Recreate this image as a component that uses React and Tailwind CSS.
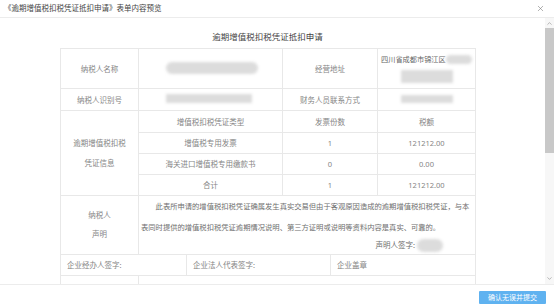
import { X, ChevronUp, ChevronDown } from 'lucide-react'

function Blur({ className }) {
  return <span className={`inline-block bg-[#dcdcdc] blur-[1.5px] ${className}`} />
}

const cell = 'border border-[#e8e8e8] p-0 text-center align-middle'

export default function App() {
  return (
    <div className="flex h-[308px] w-[554px] flex-col overflow-hidden bg-white font-['Noto_Sans','Noto_Sans_CJK_SC',sans-serif] text-[7.5px] text-[#858585]">
      <header className="flex h-[18px] shrink-0 items-center justify-between border-b border-[#ececec] pl-[4px] pr-[9px]">
        <span className="text-[7.5px] leading-none text-[#444]">《逾期增值税扣税凭证抵扣申请》表单内容预览</span>
        <X size={9} strokeWidth={1.5} className="text-[#777]" />
      </header>

      <div className="flex min-h-0 flex-1">
        <main className="min-w-0 flex-1 overflow-hidden">
          <h2 className="mb-[6px] ml-[60px] w-[415px] pt-[14px] text-center text-[8.5px] leading-[10px] text-[#444]">
            逾期增值税扣税凭证抵扣申请
          </h2>

          <table className="ml-[60px] w-[415px] table-fixed border-collapse leading-[10px]">
            <colgroup>
              <col className="w-[78px]" />
              <col className="w-[48px]" />
              <col className="w-[48px]" />
              <col className="w-[48px]" />
              <col className="w-[48px]" />
              <col className="w-[47px]" />
              <col className="w-[98px]" />
            </colgroup>
            <tbody>
              <tr>
                <td className={`${cell} h-[40px]`}>纳税人名称</td>
                <td colSpan={3} className={`${cell} text-left`}>
                  <Blur className="ml-[27px] h-[12px] w-[92px] rounded-full" />
                </td>
                <td colSpan={2} className={cell}>经营地址</td>
                <td className={`${cell} align-top text-left`}>
                  <div className="flex items-center whitespace-nowrap pl-[3px] pt-[5px] text-[7.2px] text-[#666]">
                    四川省成都市锦江区
                    <Blur className="h-[9px] w-[26px] rounded-full" />
                  </div>
                  <div className="pl-[23px] pt-[6px]">
                    <Blur className="h-[13px] w-[52px]" />
                  </div>
                </td>
              </tr>
              <tr>
                <td className={`${cell} h-[22px]`}>纳税人识别号</td>
                <td colSpan={3} className={`${cell} text-left`}>
                  <Blur className="ml-[27px] h-[9px] w-[86px]" />
                </td>
                <td colSpan={2} className={cell}>财务人员联系方式</td>
                <td className={`${cell} text-left`}>
                  <Blur className="ml-[23px] h-[8px] w-[52px]" />
                </td>
              </tr>
              <tr>
                <td rowSpan={4} className={`${cell} leading-[20px]`}>
                  逾期增值税扣税
                  <br />
                  凭证信息
                </td>
                <td colSpan={3} className={`${cell} h-[22px]`}>增值税扣税凭证类型</td>
                <td colSpan={2} className={cell}>发票份数</td>
                <td className={cell}>税额</td>
              </tr>
              <tr>
                <td colSpan={3} className={`${cell} h-[21px]`}>增值税专用发票</td>
                <td colSpan={2} className={cell}>1</td>
                <td className={cell}>121212.00</td>
              </tr>
              <tr>
                <td colSpan={3} className={`${cell} h-[21px]`}>海关进口增值税专用缴款书</td>
                <td colSpan={2} className={cell}>0</td>
                <td className={cell}>0.00</td>
              </tr>
              <tr>
                <td colSpan={3} className={`${cell} h-[21px]`}>合计</td>
                <td colSpan={2} className={cell}>1</td>
                <td className={cell}>121212.00</td>
              </tr>
              <tr>
                <td className={`${cell} h-[59px] leading-[19px]`}>
                  纳税人
                  <br />
                  声明
                </td>
                <td colSpan={6} className={`${cell} align-top text-left`}>
                  <p className="whitespace-nowrap pl-[2px] indent-[2em] text-[7.3px] leading-[21px] text-[#6e6e6e]">
                    此表所申请的增值税扣税凭证确属发生真实交易但由于客观原因造成的逾期增值税扣税凭证，与本
                    <br />
                    表同时提供的增值税扣税凭证逾期情况说明、第三方证明或说明等资料内容是真实、可靠的。
                  </p>
                  <div className="flex h-[14px] items-center justify-end pr-[32px] text-[#6e6e6e]">
                    声明人签字:
                    <Blur className="ml-[2px] h-[13px] w-[26px] rounded-full" />
                  </div>
                </td>
              </tr>
              <tr>
                <td colSpan={2} className={`${cell} h-[21px] pl-[6px] text-left`}>企业经办人签字:</td>
                <td colSpan={3} className={`${cell} pl-[6px] text-left`}>企业法人代表签字:</td>
                <td colSpan={2} className={`${cell} pl-[6px] text-left`}>企业盖章</td>
              </tr>
              <tr>
                <td className={`${cell} h-[40px]`} />
                <td colSpan={6} className={cell} />
              </tr>
            </tbody>
          </table>
        </main>

        <div className="flex w-[9px] shrink-0 flex-col items-center bg-[#f7f7f7]">
          <ChevronUp size={7} strokeWidth={2} className="mt-[2px] text-[#888]" />
          <div className="mt-[1px] h-[125px] w-full bg-[#c8c8c8]" />
          <div className="flex-1" />
          <ChevronDown size={7} strokeWidth={2} className="mb-[2px] text-[#888]" />
        </div>
      </div>

      <footer className="flex h-[24px] shrink-0 justify-end border-t border-[#ececec] pr-[8px] pt-[6px]">
        <button
          type="button"
          className="h-[13px] w-[67px] rounded-[1px] bg-[#5fb2f0] text-[7px] leading-[13px] text-white"
        >
          确认无误并提交
        </button>
      </footer>
    </div>
  )
}
